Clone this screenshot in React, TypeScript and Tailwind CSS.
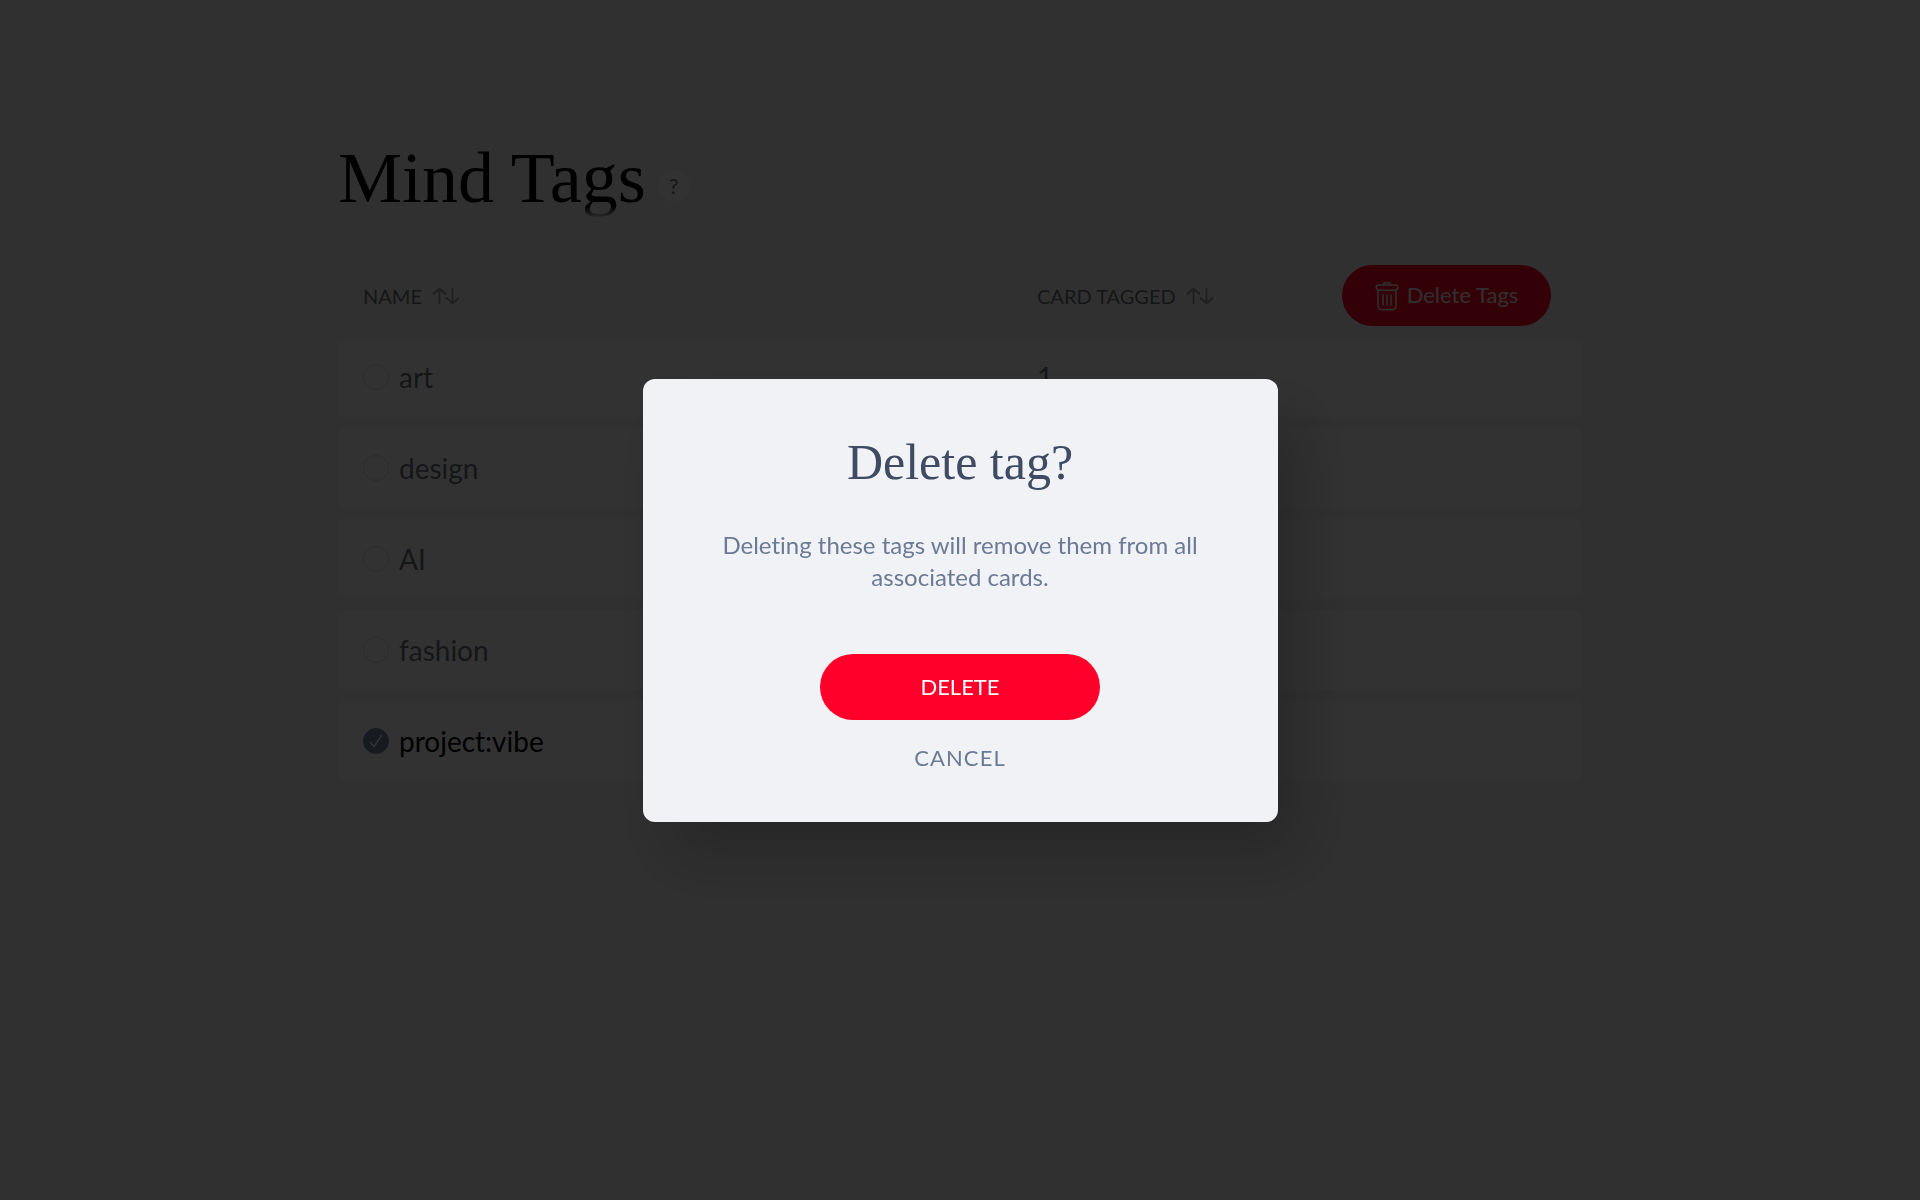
import { useState } from 'react';

const TAGS = [
  { name: 'art', count: 1 },
  { name: 'design', count: 1 },
  { name: 'AI', count: 1 },
  { name: 'fashion', count: 1 },
  { name: 'project:vibe', count: 1 },
];

function SortIcon() {
  return (
    <svg width="28" height="18" viewBox="0 0 28 18" fill="none" stroke="#989da5" strokeWidth="1.8" strokeLinecap="round" strokeLinejoin="round">
      <path d="M7.500 16.500V1.500M1.500 7l6-5.500L13.500 7" />
      <path d="M20.500 1.500v15M14.500 11l6 5.500 6-5.500" />
    </svg>
  );
}

function TrashIcon() {
  return (
    <svg width="24" height="30" viewBox="0 0 24 30" fill="none" stroke="currentColor" strokeWidth="1.5" strokeLinecap="round" strokeLinejoin="round">
      <path d="M8 4c.5-1.800 1.500-2.500 4-2.500s3.500.7 4 2.500" />
      <path d="M4 4h16c1.700 0 2.800 1.200 2.800 2.600S21.700 9.200 20 9.200H4c-1.700 0-2.800-1.200-2.800-2.600S2.300 4 4 4z" />
      <path d="M3 9.500v14.500c0 3 1.800 4.800 4.500 4.800h9c2.700 0 4.500-1.800 4.500-4.800V9.500" />
      <path d="M8 14v10M12 14v10M16 14v10" />
    </svg>
  );
}

export default function App() {
  const [selected, setSelected] = useState<string[]>(['project:vibe']);
  const [open, setOpen] = useState(true);

  const toggle = (name: string) => {
    setSelected((prev) => (prev.includes(name) ? prev.filter((n) => n !== name) : [...prev, name]));
  };

  return (
    <div className="min-h-screen bg-[#f0f0f0] font-['Lato','Open_Sans',sans-serif] text-[#6b7078] [font-variant-ligatures:none]">
      <main className="mx-auto w-full max-w-[1244px] pt-[132px]">
        <div className="flex items-center gap-3">
          <h1 className="bg-linear-to-b from-black from-80% to-transparent to-95% bg-clip-text font-['Liberation_Serif',serif] text-[72px] leading-[92px] text-transparent">
            Mind Tags
          </h1>
          <button aria-label="About tags" className="mt-4 size-8 rounded-full bg-white/60 text-[22px] leading-8">
            ?
          </button>
        </div>

        <table className="mt-[30px] w-full border-separate border-spacing-x-0 border-spacing-y-[11px]">
          <thead>
            <tr className="h-[61px] text-left text-xl">
              <th className="w-[674px] pl-[25px] font-normal">
                <button className="flex items-center gap-2.5">
                  NAME <SortIcon />
                </button>
              </th>
              <th className="pl-[25px] font-normal">
                <button className="flex items-center gap-2.5">
                  CARD TAGGED <SortIcon />
                </button>
              </th>
              <th className="pr-[31px] font-normal">
                <button
                  onClick={() => setOpen(true)}
                  className="ml-auto flex h-[61px] w-[209px] items-center justify-center gap-2 rounded-full bg-[#ff002a] text-[22px] text-[#f5ebe6]"
                >
                  <TrashIcon />
                  Delete Tags
                </button>
              </th>
            </tr>
          </thead>
          <tbody>
            {TAGS.map((tag) => {
              const checked = selected.includes(tag.name);
              return (
                <tr key={tag.name} className="h-20 bg-[#fafafa] text-[28px]">
                  <td className="rounded-l-lg pl-[25px]">
                    <label className="flex items-center gap-2.5">
                      <span className="grid place-items-center">
                        <input
                          type="checkbox"
                          checked={checked}
                          onChange={() => toggle(tag.name)}
                          className="col-start-1 row-start-1 size-[26px] appearance-none rounded-full border border-[#d4d7dc] checked:border-[#748297] checked:bg-[#748297]"
                        />
                        {checked && (
                          <svg className="pointer-events-none col-start-1 row-start-1" width="14" height="14" viewBox="0 0 14 14" fill="none" stroke="#fff" strokeWidth="1.6" strokeLinecap="round" strokeLinejoin="round">
                            <path d="M1.500 8.500l3.500 4L12.500 1.500" />
                          </svg>
                        )}
                      </span>
                      <span className={checked ? 'text-black' : ''}>{tag.name}</span>
                    </label>
                  </td>
                  <td className="pl-[25px]">{tag.count}</td>
                  <td className="rounded-r-lg" />
                </tr>
              );
            })}
          </tbody>
        </table>
      </main>

      {open && (
        <div className="fixed inset-0 flex items-center justify-center bg-black/80">
          <div
            role="dialog"
            aria-modal="true"
            aria-labelledby="delete-title"
            className="flex w-full max-w-[635px] flex-col items-center rounded-xl bg-[#f0f2f6] px-16 pt-12 pb-[46px] text-center shadow-[24px_36px_64px_rgba(0,0,0,0.22)]"
          >
            <h2 id="delete-title" className="font-['Liberation_Serif',serif] text-[50px] leading-[70px] text-[#3e4b63]">
              Delete tag?
            </h2>
            <p className="mt-8 text-2xl leading-8 text-[#6b7b95]">
              Deleting these tags will remove them from all associated cards.
            </p>
            <button
              onClick={() => setOpen(false)}
              className="mt-[61px] h-[66px] w-[280px] rounded-full bg-[#ff002a] text-[22px] text-white"
            >
              DELETE
            </button>
            <button onClick={() => setOpen(false)} className="mt-5 h-9 px-4 text-[22px] tracking-wider text-[#6b7b95]">
              CANCEL
            </button>
          </div>
        </div>
      )}
    </div>
  );
}
